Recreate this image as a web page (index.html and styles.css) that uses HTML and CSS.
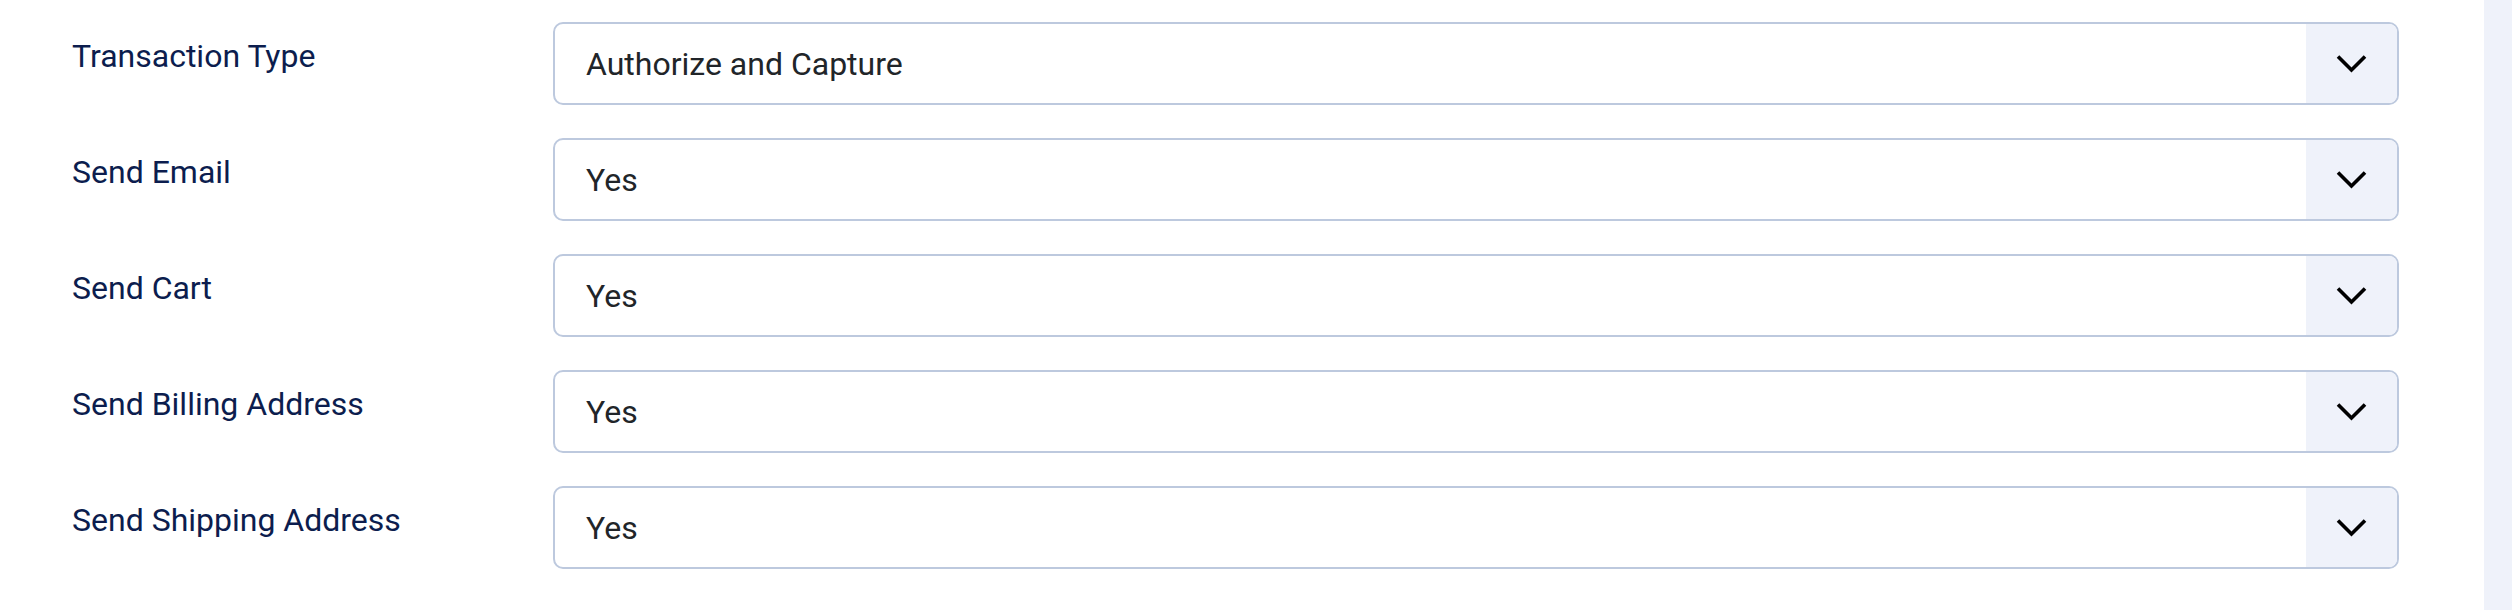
FILE: index.html
```html
<!DOCTYPE html>
<html>
<head>
<meta charset="UTF-8">
<title>Payment options</title>
<link rel="stylesheet" href="styles.css">
</head>
<body>
	<div class="page">
		<div class="content">
			<div class="row">
				<label class="label">Transaction Type</label>
				<div class="field">
					<span class="value">Authorize and Capture</span>
					<span class="arrow"><svg width="31" height="19" viewBox="0 0 31 19"><path d="M2 2.5 L15.5 16 L29 2.5" fill="none" stroke="#000" stroke-width="3.6"/></svg></span>
				</div>
			</div>
			<div class="row">
				<label class="label">Send Email</label>
				<div class="field">
					<span class="value">Yes</span>
					<span class="arrow"><svg width="31" height="19" viewBox="0 0 31 19"><path d="M2 2.5 L15.5 16 L29 2.5" fill="none" stroke="#000" stroke-width="3.6"/></svg></span>
				</div>
			</div>
			<div class="row">
				<label class="label">Send Cart</label>
				<div class="field">
					<span class="value">Yes</span>
					<span class="arrow"><svg width="31" height="19" viewBox="0 0 31 19"><path d="M2 2.5 L15.5 16 L29 2.5" fill="none" stroke="#000" stroke-width="3.6"/></svg></span>
				</div>
			</div>
			<div class="row">
				<label class="label">Send Billing Address</label>
				<div class="field">
					<span class="value">Yes</span>
					<span class="arrow"><svg width="31" height="19" viewBox="0 0 31 19"><path d="M2 2.5 L15.5 16 L29 2.5" fill="none" stroke="#000" stroke-width="3.6"/></svg></span>
				</div>
			</div>
			<div class="row">
				<label class="label">Send Shipping Address</label>
				<div class="field">
					<span class="value">Yes</span>
					<span class="arrow"><svg width="31" height="19" viewBox="0 0 31 19"><path d="M2 2.5 L15.5 16 L29 2.5" fill="none" stroke="#000" stroke-width="3.6"/></svg></span>
				</div>
			</div>
		</div>
		<div class="sidebar"></div>
	</div>
</body>
</html>
```

FILE: styles.css
```css
/* page frame */
html, body {
	margin: 0;
	height: 100%;
	background: #ffffff;
}

.page {
	display: flex;
	height: 610px;
	font-family: Roboto, "Liberation Sans", sans-serif;
}

.content {
	flex: none;
	width: 2484px;
	box-sizing: border-box;
	padding: 22px 0 0 72px;
}

.sidebar {
	flex: 1;
	background-color: #eff2fa;
}

/* form rows */
.row {
	display: grid;
	grid-template-columns: 481px 1846px;
	margin-bottom: 33px;
}

.label {
	padding-top: 10px;
	font-size: 32px;
	line-height: 1.5;
	color: #0c1d4e;
}

.field {
	display: flex;
	height: 83px;
	box-sizing: border-box;
	border: 2px solid #bdc9de;
	border-radius: 10px;
	overflow: hidden;
}

.value {
	flex: 1;
	display: flex;
	align-items: center;
	padding-left: 31px;
	font-size: 32px;
	color: #212529;
}

.arrow {
	width: 91px;
	display: flex;
	align-items: center;
	justify-content: center;
	background-color: #eff2fa;
}
```
